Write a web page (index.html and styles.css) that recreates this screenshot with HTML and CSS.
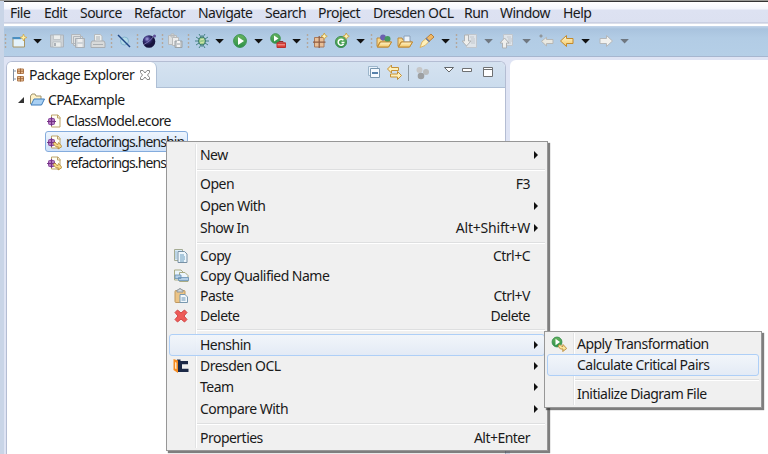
FILE: index.html
```html
<!DOCTYPE html>
<html lang="en">
<head>
<meta charset="utf-8">
<title>Package Explorer</title>
<link rel="stylesheet" href="styles.css">
</head>
<body>
<svg class="defs" aria-hidden="true">
  <defs>
    <linearGradient id="green" x2="0" y2="1"><stop stop-color="#69b45f"/><stop offset="1" stop-color="#2b9048"/></linearGradient>
    <linearGradient id="gold" x2="0" y2="1"><stop stop-color="#fff6cf"/><stop offset="1" stop-color="#f3c765"/></linearGradient>
    <radialGradient id="ball" cx=".35" cy=".3"><stop stop-color="#a7a3e4"/><stop offset=".45" stop-color="#3c367f"/><stop offset="1" stop-color="#17143f"/></radialGradient>
    <symbol id="dots" viewBox="0 0 3 16"><path d="M1.500 1v2M1.500 5v2M1.500 9v2M1.500 13v2" stroke="#b3a79c" stroke-width="1.400"/></symbol>
    <symbol id="drop" viewBox="0 0 9 16"><path d="M.3 6h8.600L4.600 10.400z" fill="currentColor"/></symbol>
    <symbol id="spark" viewBox="0 0 6 6"><path d="M3 0l1 2 2 1-2 1-1 2-1-2-2-1 2-1z" fill="#fff3b5" stroke="#c99b34" stroke-width=".7"/></symbol>
    <symbol id="new" viewBox="0 0 16 16"><path d="M2 4.500h11.500v9.500H2z" fill="#e4f2fb" stroke="#a99563"/><path d="M1.500 4h9v2.200h-9z" fill="#4a8fc2"/><path d="M12.500 1l1 2.500 2.500 1-2.500 1-1 2.500-1-2.500-2.500-1 2.500-1z" fill="#fff0a2" stroke="#d0a444" stroke-width=".7"/></symbol>
    <symbol id="save" viewBox="0 0 16 16"><path d="M1.500 2h13v12h-13z" fill="#cdd2d6" stroke="#acb3ba"/><path d="M4.500 2h7v4.500h-7zM4 9h8v5H4z" fill="#eceeed" stroke="#b4babf" stroke-width=".7"/><path d="M6 10v3" stroke="#969da6" stroke-width="1.500"/></symbol>
    <symbol id="saveall" viewBox="0 0 16 16"><path d="M1.500 1.500h9v9h-9zM3.500 3.500h9v9h-9z" fill="#dfe1e1" stroke="#b2b7bc"/><path d="M5.500 5.500h9v9h-9z" fill="#cdd2d6" stroke="#a9afb5"/><path d="M7.500 6h5v3h-5zM7.500 11h5v3h-5z" fill="#eee"/></symbol>
    <symbol id="print" viewBox="0 0 16 16"><path d="M4.500 8V1.500h6l1.500 2V8" fill="#edf0ef" stroke="#b6babd"/><path d="M2 8h12l1 2v4.500H1V10z" fill="#d8dada" stroke="#a9adb1"/><path d="M3 11.500h10M6 4h4M6 6h4" stroke="#aaafb3"/></symbol>
    <symbol id="skip" viewBox="0 0 16 16"><circle cx="8.500" cy="8" r="4" fill="#b4dbe8" stroke="#86b6d0"/><path d="M2 2l12 12" stroke="#1f4584" stroke-width="1.400"/></symbol>
    <symbol id="sphere" viewBox="0 0 16 16"><circle cx="8" cy="8.500" r="6.300" fill="url(#ball)"/><path d="M2 12Q9 9 14 2" fill="none" stroke="#a9a4dc" stroke-width=".6"/><circle cx="13.500" cy="3" r="1.500" fill="#60529a"/></symbol>
    <symbol id="copysave" viewBox="0 0 16 16"><path d="M1.500 2.500h8v9h-8zM4 1h3v3H4z" fill="#dfe1e1" stroke="#b6b9bb"/><path d="M5.500 4.500h6v8h-6z" fill="#eee" stroke="#b9bbbc"/><path d="M8 8h7v6.500H8z" fill="#c7cbce" stroke="#9ca2a6"/><path d="M10 8h3v2h-3zM10 12h3v2h-3z" fill="#f4f4f4"/></symbol>
    <symbol id="bug" viewBox="0 0 16 16"><path d="M8 2v12M2 4l12 8M2 12l12-8M1 8h14M5 1l2 3M11 1L9 4M5 15l2-3M11 15l-2-3" stroke="#397a78" stroke-width=".9"/><ellipse cx="8" cy="8" rx="3.500" ry="4" fill="#9acb8a" stroke="#38766f"/><path d="M6 7l4-1M6 10l4-1" stroke="#d7e9ad"/></symbol>
    <symbol id="run" viewBox="0 0 16 16"><circle cx="8" cy="8" r="6.400" fill="url(#green)" stroke="#3c9352"/><path d="M6 4l6 4-6 4z" fill="#fff"/></symbol>
    <symbol id="runext" viewBox="0 0 16 16"><circle cx="5.500" cy="5.500" r="4.800" fill="url(#green)" stroke="#3c9352"/><path d="M4 2.500l4.500 3L4 8.500z" fill="#fff"/><path d="M9 9.500V8.500h4v1" fill="none" stroke="#8e2c29"/><path d="M7 9.800h8.500v4.700H7z" fill="#dc3f38" stroke="#b9302d"/><path d="M7.500 11.800h7.500" stroke="#f2a49b"/></symbol>
    <symbol id="package" viewBox="0 0 16 16"><path d="M2.500 4.500h9.500v9.500H2.500z" fill="#e8bf97" stroke="#a8795a"/><path d="M7.200 3v12M1 9.200h12.500" stroke="#8d5c43" stroke-width="1.200"/><use href="#spark" x="9" y="0" width="6.500" height="6.500"/></symbol>
    <symbol id="class" viewBox="0 0 16 16"><circle cx="7" cy="9" r="5.600" fill="url(#green)" stroke="#46915a"/><path d="M9.400 7.200A3 3 0 1 0 9.600 11M7.500 9.500h3" fill="none" stroke="#fff" stroke-width="1.500"/><use href="#spark" x="9" y="0" width="6.500" height="6.500"/></symbol>
    <symbol id="folder" viewBox="0 0 16 16"><path d="M1 13V5h4l1 2h7v5" fill="#f9d889" stroke="#b98a42"/><path d="M1 14l3-5h11.500l-3 5z" fill="url(#gold)" stroke="#c08a34"/></symbol>
    <symbol id="types" viewBox="0 0 16 16"><use href="#folder"/><circle cx="7" cy="4.500" r="2.900" fill="#6c60b0"/><circle cx="11.500" cy="6" r="3" fill="#459960"/><path d="M1.500 14l3-5h11l-3 5z" fill="url(#gold)" stroke="#c08a34"/></symbol>
    <symbol id="resource" viewBox="0 0 16 16"><use href="#folder"/><path d="M7 3h6v6H7z" fill="#edf4fb" stroke="#8ba0b9"/><path d="M1.500 14l3-5h11l-3 5z" fill="url(#gold)" stroke="#c08a34"/></symbol>
    <symbol id="torch" viewBox="0 0 16 16"><path d="M1 14.500l2-5.500 4-3.500 3 3-4 4z" fill="#fff0b9" stroke="#dcb464"/><path d="M7 5.500L12 1l3 3-5 4.500z" fill="#f0b866" stroke="#b57f3c"/><path d="M7 5.200l3.500 3.500" stroke="#6c7fa2" stroke-width="1.600"/></symbol>
    <symbol id="nextnote" viewBox="0 0 16 16"><path d="M4.500 1.500h10v13h-10z" fill="#dfe4e9" stroke="#c0c6cd"/><path d="M8 4h4M9 6h4M9 8h4M9 10h4" stroke="#c2c7cd"/><path d="M2.500 2h4v6h2.500l-4.500 5L0 8h2.500z" fill="#efefed" stroke="#afb2b4"/></symbol>
    <symbol id="prevnote" viewBox="0 0 16 16"><path d="M4.500 1.500h9v11h-9z" fill="#dfe4e9" stroke="#c0c6cd"/><path d="M8 4h4M9 6h4M9 8h4M9 10h3" stroke="#c2c7cd"/><path d="M3.500 15v-5H1l4.500-5L10 10H7.500v5z" fill="#efefed" stroke="#afb2b4"/></symbol>
    <symbol id="left" viewBox="0 0 16 16"><path d="M1.500 8L7.500 2.500V5.500h6.500v5H7.500v3z"/></symbol>
    <symbol id="lastedit" viewBox="0 0 16 16"><path d="M3.500 8.300l5-4V6.500H15V10.500H8.500v2.500z" fill="#e9e8e1" stroke="#b7b7b4"/><path d="M1 3h4M3 1v4M2 2l2 2M2 4l2-2" stroke="#8e9296" stroke-width=".8"/></symbol>
    <symbol id="tree" viewBox="0 0 16 16"><path d="M2.500 2v12M2 4h3M2 12h3" stroke="#8291a4" fill="none"/><path d="M6.500 2h6v4.500h-6zM6.500 9.500h6V14h-6z" fill="#e9bd8f" stroke="#b17c50"/><path d="M9.500 1.500v5.500M9.500 9v5.500M6 4.200h7M6 11.700h7" stroke="#9c6338" stroke-width=".9"/></symbol>
    <symbol id="bluefolder" viewBox="0 0 16 16"><path d="M1.500 12V4l1.500-2h3l1 2h5v6" fill="#fff2c7" stroke="#a0946f"/><path d="M2 13l3-6h10.500l-3 6z" fill="#a9d0f3" stroke="#3f7cba"/></symbol>
    <symbol id="ecore" viewBox="0 0 16 16"><path d="M5.500 2h6.500l2 2.500V14H5.500z" fill="#fffef4" stroke="#bda46a"/><path d="M11.500 2v3h3" fill="none" stroke="#bda46a"/><path d="M5.500 4v9M1 8.500h9" stroke="#7a3a8a" stroke-width="1.200"/><rect x="2.500" y="5.500" width="6" height="6" rx="1" fill="#b277c0" stroke="#85449a"/><path d="M5.500 5v7M2 8.500h7" stroke="#743083"/></symbol>
    <symbol id="henshin" viewBox="0 0 16 16"><use href="#ecore"/><path d="M7 9.500l2-1.500 2.500 3 1-2.500 3.500 4-4 2.500.3-2.200H10z" fill="#f8dc8b" stroke="#b1842f" stroke-width=".8"/></symbol>
    <symbol id="copy" viewBox="0 0 16 16"><path d="M1.500 1.500h8v11h-8z" fill="#d8eaf5" stroke="#a5ab93"/><path d="M5 3.500h6.500l2.500 2.500v8.500H5z" fill="#edf6fc" stroke="#7891a5"/><path d="M7 7h4M7 9h5M7 11h5M7 13h4M2.500 4h1M2.500 6h1M2.500 8h1M2.500 10h1" stroke="#5a91b7" stroke-width=".9"/></symbol>
    <symbol id="copyq" viewBox="0 0 16 16"><path d="M1.500 2h6.500l2 2v8H1.500z" fill="#eaf4f9" stroke="#a9ab83"/><path d="M6.500 4.500h5.500l3 3v6H6.500z" fill="#edf6fc" stroke="#a9ab83"/><path d="M2 7h6v3.500H2zM5.500 9.500h10v3h-10z" fill="#b4cfe5" stroke="#6690b5" stroke-width=".8"/></symbol>
    <symbol id="paste" viewBox="0 0 16 16"><rect x="2" y="2.500" width="10" height="12" rx="1" fill="#ecc486" stroke="#bf985f"/><path d="M4 4V2h1.500L6 .8h2L8.500 2H10v2z" fill="#d7dde1" stroke="#8c9499"/><path d="M7 6.500h5l2.500 2.500v5.500H7z" fill="#f2f8fc" stroke="#7998af"/><path d="M8.500 10h4M8.500 12h4" stroke="#6993b5"/></symbol>
    <symbol id="delete" viewBox="0 0 16 16"><path d="M4.500 2L8 5l3.500-3 2.500 2.500L11 8l3 3.500L11.500 14 8 11l-3.500 3L2 11.500 5 8 2 4.500z" fill="#ee5b58" stroke="#d24646"/></symbol>
    <symbol id="ocl" viewBox="0 0 16 16"><path d="M4 1.500h3.500v1.500H15v3.200H9v4.600h6.500V14H4z" fill="#1c2947"/><path d="M.5 1l4.500 1.500V15L.5 12z" fill="#f68b1f"/><path d="M2 4l1.500.7v6.500L2 10.500z" fill="#ffe5c4"/></symbol>
    <symbol id="apply" viewBox="0 0 16 16"><circle cx="6" cy="6" r="4.900" fill="url(#green)" stroke="#3c9352"/><path d="M4.500 2.800l4.500 3.200-4.500 3.200z" fill="#fff"/><path d="M7 10l2-1.500 2.500 2.500.5-2.500 3.700 4-4 3 .3-2.500h-2.500z" fill="#fae49c" stroke="#b98936" stroke-width=".9"/></symbol>
  </defs>
</svg>

<div class="window">
  <nav class="menubar">
    <span>File</span><span>Edit</span><span>Source</span><span>Refactor</span><span>Navigate</span><span>Search</span><span>Project</span><span>Dresden OCL</span><span>Run</span><span>Window</span><span>Help</span>
  </nav>
  <div class="toolbar">
    <svg class="dots"><use href="#dots"/></svg>
    <svg><use href="#new"/></svg>
    <svg class="drop"><use href="#drop"/></svg>
    <svg><use href="#save"/></svg>
    <svg><use href="#saveall"/></svg>
    <svg><use href="#print"/></svg>
    <svg class="dots"><use href="#dots"/></svg>
    <svg><use href="#skip"/></svg>
    <svg class="dots"><use href="#dots"/></svg>
    <svg><use href="#sphere"/></svg>
    <svg class="dots"><use href="#dots"/></svg>
    <svg><use href="#copysave"/></svg>
    <svg class="dots"><use href="#dots"/></svg>
    <svg><use href="#bug"/></svg>
    <svg class="drop"><use href="#drop"/></svg>
    <svg><use href="#run"/></svg>
    <svg class="drop"><use href="#drop"/></svg>
    <svg><use href="#runext"/></svg>
    <svg class="drop"><use href="#drop"/></svg>
    <svg class="dots"><use href="#dots"/></svg>
    <svg><use href="#package"/></svg>
    <svg><use href="#class"/></svg>
    <svg class="drop"><use href="#drop"/></svg>
    <svg class="dots"><use href="#dots"/></svg>
    <svg><use href="#types"/></svg>
    <svg><use href="#resource"/></svg>
    <svg><use href="#torch"/></svg>
    <svg class="drop"><use href="#drop"/></svg>
    <svg class="dots"><use href="#dots"/></svg>
    <svg><use href="#nextnote"/></svg>
    <svg class="drop disabled"><use href="#drop"/></svg>
    <svg><use href="#prevnote"/></svg>
    <svg class="drop disabled"><use href="#drop"/></svg>
    <svg><use href="#lastedit"/></svg>
    <svg class="back"><use href="#left"/></svg>
    <svg class="drop"><use href="#drop"/></svg>
    <svg class="forward"><use href="#left"/></svg>
    <svg class="drop disabled"><use href="#drop"/></svg>
  </div>
  <main class="workbench">
    <section class="explorer">
      <header class="view-header">
        <div class="tab">
          <svg class="icon"><use href="#tree"/></svg>
          <span>Package Explorer</span>
          <svg class="close" viewBox="0 0 12 12"><path d="M1.500 1.500H4L6 4l2-2.500h2.500v2L8.500 6l2 2.500v2H8L6 8l-2 2.500H1.500v-2l2-2.500-2-2.500z" fill="#fff" stroke="#888"/></svg>
        </div>
        <svg class="view-tools" viewBox="0 0 132 24">
          <path d="M1.500 4.500h9v9h-9z" fill="#e9f2fb" stroke="#9db6cb"/><path d="M3.500 6.500h9v9h-9z" fill="#f5faff" stroke="#7896ae"/><path d="M5 11h6" stroke="#20598f" stroke-width="1.500"/>
          <path d="M20.500 7l4-4v2.500h7v3h-7V11z" fill="#fff0b9" stroke="#c59135"/><path d="M34.500 13.500l-4-4V12h-7v3h7v2.500z" fill="#fff0b9" stroke="#c59135"/>
          <path d="M41.500 3v16" stroke="#8c9aa6"/>
          <circle cx="52.500" cy="8" r="3" fill="#c6c7c8"/><circle cx="59" cy="10" r="3" fill="#b9bbbc"/><circle cx="54" cy="14" r="3.300" fill="#9d9fa1"/>
          <path d="M77.500 5.500h9L82 10z" fill="#fff" stroke="#63676a"/>
          <path d="M95.500 6.500h9v3h-9z" fill="#fff" stroke="#6e7072"/>
          <path d="M116.500 5.500h9v9h-9zM116.500 7.500h9" fill="#fff" stroke="#6e7072"/>
        </svg>
      </header>
      <div class="tree">
        <div class="node root"><svg class="twisty" viewBox="0 0 8 8"><path d="M7 1v6H1z" fill="#333"/></svg><svg class="icon"><use href="#bluefolder"/></svg><span>CPAExample</span></div>
        <div class="node"><svg class="icon"><use href="#ecore"/></svg><span>ClassModel.ecore</span></div>
        <div class="node selected"><svg class="icon"><use href="#henshin"/></svg><span>refactorings.henshin</span></div>
        <div class="node tight"><svg class="icon"><use href="#henshin"/></svg><span>refactorings.henshin</span></div>
      </div>
    </section>
    <section class="editor"></section>
  </main>
</div>

<div class="menu context-menu">
  <div class="item sub raised"><span>New</span></div>
  <hr>
  <div class="item"><span>Open</span><kbd>F3</kbd></div>
  <div class="item sub raised"><span>Open With</span></div>
  <div class="item sub raised"><span>Show In</span><kbd class="wide">Alt+Shift+W</kbd></div>
  <hr>
  <div class="item"><svg class="icon"><use href="#copy"/></svg><span>Copy</span><kbd>Ctrl+C</kbd></div>
  <div class="item"><svg class="icon"><use href="#copyq"/></svg><span>Copy Qualified Name</span></div>
  <div class="item"><svg class="icon"><use href="#paste"/></svg><span>Paste</span><kbd>Ctrl+V</kbd></div>
  <div class="item"><svg class="icon"><use href="#delete"/></svg><span>Delete</span><kbd>Delete</kbd></div>
  <hr>
  <div class="item sub active"><span>Henshin</span></div>
  <div class="item sub raised"><svg class="icon"><use href="#ocl"/></svg><span>Dresden OCL</span></div>
  <div class="item sub raised"><span>Team</span></div>
  <div class="item sub"><span>Compare With</span></div>
  <hr>
  <div class="item"><span>Properties</span><kbd>Alt+Enter</kbd></div>
</div>

<div class="menu submenu">
  <div class="item"><svg class="icon"><use href="#apply"/></svg><span>Apply Transformation</span></div>
  <div class="item active"><span>Calculate Critical Pairs</span></div>
  <hr>
  <div class="item raised"><span>Initialize Diagram File</span></div>
</div>
</body>
</html>
```
FILE: styles.css
```css
* { box-sizing: border-box; }
body {
  margin: 0;
  width: 768px;
  height: 454px;
  overflow: hidden;
  position: relative;
  font-family: "Noto Sans", "Open Sans", sans-serif;
  font-size: 14px;
  letter-spacing: -.52px;
  line-height: 18px;
  color: #1a1a1a;
  background: #c9d5e7;
}
.defs { position: absolute; width: 0; height: 0; }
.icon { width: 16px; height: 16px; flex: none; }

.window {
  height: 454px;
  padding-left: 4px;
  display: flex;
  flex-direction: column;
  border-top: 1px solid #9a9a96;
}
.menubar {
  height: 25px;
  padding: 2px 0 0 6px;
  display: grid;
  grid-template-columns: 34px 36px 54px 64px 67px 53px 55px 91px 36px 63px 1fr;
  align-items: start;
  white-space: nowrap;
  border-top: 1px solid #333;
  background: linear-gradient(#fff 0, #f4f6fc 7px, #dde2f2 8px, #dce1f1 20px, #b9bfd4 21px, #fff 22px);
}
.toolbar {
  height: 30px;
  display: grid;
  grid-template-columns: 7px 22px 16px 21px 20px 20px 6px 20px 5px 20px 6px 20px 7px 21px 17px 22px 16px 22px 14px 6px 22px 22px 14px 6px 21px 22px 22px 14px 7px 22px 15px 23px 16px 21px 22px 17px 22px 9px;
  align-items: center;
  background: linear-gradient(#c4d6ea 0, #a9c3de 3px, #b2cce5 12px, #b5cfe7);
}
.toolbar svg { width: 16px; height: 16px; }
.toolbar .dots { width: 3px; }
.toolbar .drop { width: 9px; color: #111; }
.toolbar .disabled { color: #6f7780; }
.back { fill: url(#gold); stroke: #c48a2a; }
.forward { fill: #f1f1ee; stroke: #b4b7b9; transform: scaleX(-1); }

.workbench {
  flex: 1;
  display: grid;
  grid-template-columns: 500px 1fr;
  gap: 4px;
  padding: 4px 0 0 2px;
  background: #dfe4f4;
  border-top: 1px solid #a6b6cf;
}
.explorer {
  background: #fff;
  border: 1px solid #b4bdd3;
  border-bottom: 0;
  border-radius: 6px 6px 0 0;
  overflow: hidden;
}
.view-header {
  height: 26px;
  display: flex;
  justify-content: space-between;
  background: linear-gradient(#d5e2f0, #cbdced);
  border-bottom: 1px solid #aebfd5;
}
.tab {
  width: 150px;
  height: 26px;
  padding-left: 4px;
  display: flex;
  align-items: center;
  background: #fff;
  border-right: 1px solid #aebfd5;
  border-radius: 0 6px 0 0;
  white-space: nowrap;
}
.tab span { width: 111px; margin-left: 2px; }
.close { width: 12px; height: 12px; margin-left: -1px; }
.view-tools { width: 132px; height: 24px; margin-right: 6px; }

.tree { padding-top: 1px; }
.node {
  height: 21px;
  margin-left: 38px;
  display: flex;
  align-items: center;
  gap: 4px;
  width: max-content;
  white-space: nowrap;
  border: 1px solid transparent;
}
.node:not(.root) span { letter-spacing: -.65px; }
.node.selected span,
.node.tight span { letter-spacing: -.9px; }
.node.root { margin-left: 7px; padding-left: 2px; gap: 0; }
.node.root .icon { margin: 0 3px 0 4px; }
.twisty { width: 8px; height: 8px; }
.node.selected {
  width: 143px;
  border-color: #84acdd;
  border-radius: 3px;
  background: linear-gradient(#eef5fd, #cfe1f8);
}
.editor { background: #fff; border-radius: 6px 0 0 0; margin-top: -1px; }

.menu {
  position: absolute;
  background: linear-gradient(90deg, transparent 26px, #e2e3e4 26px, #e2e3e4 27px, #fff 27px, #fff 28px, transparent 28px) content-box, #f0f0f0;
  border: 1px solid #979797;
  padding: 2px;
  display: grid;
  box-shadow: 2px 2px 1px rgba(40, 40, 40, .6);
}
.context-menu {
  left: 166px;
  top: 141px;
  width: 382px;
  height: 310px;
  grid-template-rows: 22px 7px 22px 22px 22px 7px 20px 20px 20px 20px 8px 22px 21px 21px 22px 7px 22px;
}
.submenu {
  left: 544px;
  top: 331px;
  width: 218px;
  height: 77px;
  padding-top: 1px;
  grid-template-rows: 21px 22px 8px 21px;
}
.item {
  display: grid;
  grid-template-columns: 30px 1fr auto 18px;
  align-items: center;
  white-space: nowrap;
  border: 1px solid transparent;
}
.item .icon { grid-column: 1; margin-left: 3px; grid-row: 1; }
.item span { grid-column: 2; grid-row: 1; }
.item kbd { grid-column: 3; grid-row: 1; font: inherit; margin-right: -4px; }
.item .wide { letter-spacing: -.2px; }
.item.raised { padding-bottom: 1px; }
.item.sub::after {
  content: "";
  grid-column: 4;
  grid-row: 1;
  justify-self: end;
  margin-right: 6px;
  border-left: 4px solid #111;
  border-top: 4px solid transparent;
  border-bottom: 4px solid transparent;
}
.submenu .item { grid-template-columns: 29px 1fr auto 18px; }
.item.active {
  border-color: #aecff7;
  border-radius: 3px;
  background: linear-gradient(rgba(242, 246, 251, .9), rgba(226, 234, 246, .9));
}
.menu hr {
  width: calc(100% - 28px);
  height: 2px;
  margin: 3px 0 0 28px;
  border: 0;
  border-top: 1px solid #dedfe0;
  border-bottom: 1px solid #fff;
}
```
